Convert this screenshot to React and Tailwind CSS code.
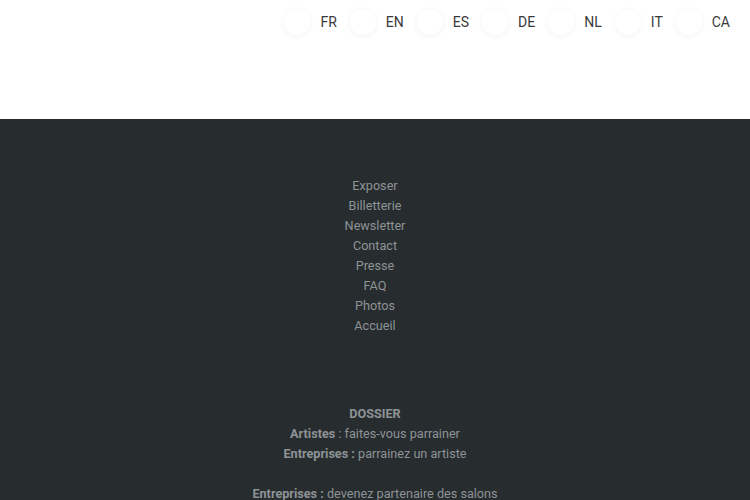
const LANGS = ['FR', 'EN', 'ES', 'DE', 'NL', 'IT', 'CA']

const LINKS = ['Exposer', 'Billetterie', 'Newsletter', 'Contact', 'Presse', 'FAQ', 'Photos', 'Accueil']

function LangSwitch() {
  return (
    <ul className="flex items-center justify-end gap-[13px] pr-[20px] pt-[9px]">
      {LANGS.map((code) => (
        <li key={code} className="flex items-center gap-[10px]">
          <span className="block h-[26px] w-[26px] rounded-full bg-white shadow-[0_1px_6px_rgba(0,0,0,0.06)]" />
          <span className="text-[14px] leading-[26px] text-[#3a3a3a]">{code}</span>
        </li>
      ))}
    </ul>
  )
}

export default function App() {
  return (
    <div className="min-h-[500px] bg-white font-['Roboto','Liberation_Sans',sans-serif]">
      <header className="h-[119px] bg-white">
        <LangSwitch />
      </header>

      <footer className="bg-[#272c2f] pb-10 pt-[57px] text-center text-[12.65px] leading-[20px] text-[#8e9396]">
        <nav className="flex flex-col items-center">
          {LINKS.map((link) => (
            <a key={link} href="#" className="hover:text-white">
              {link}
            </a>
          ))}
        </nav>

        <div className="mt-[68px]">
          <p className="font-bold">DOSSIER</p>
          <p>
            <span className="font-bold">Artistes</span> : faites-vous parrainer
          </p>
          <p>
            <span className="font-bold">Entreprises :</span> parrainez un artiste
          </p>
          <p className="mt-[20px]">
            <span className="font-bold">Entreprises :</span> devenez partenaire des salons
          </p>
        </div>
      </footer>
    </div>
  )
}
